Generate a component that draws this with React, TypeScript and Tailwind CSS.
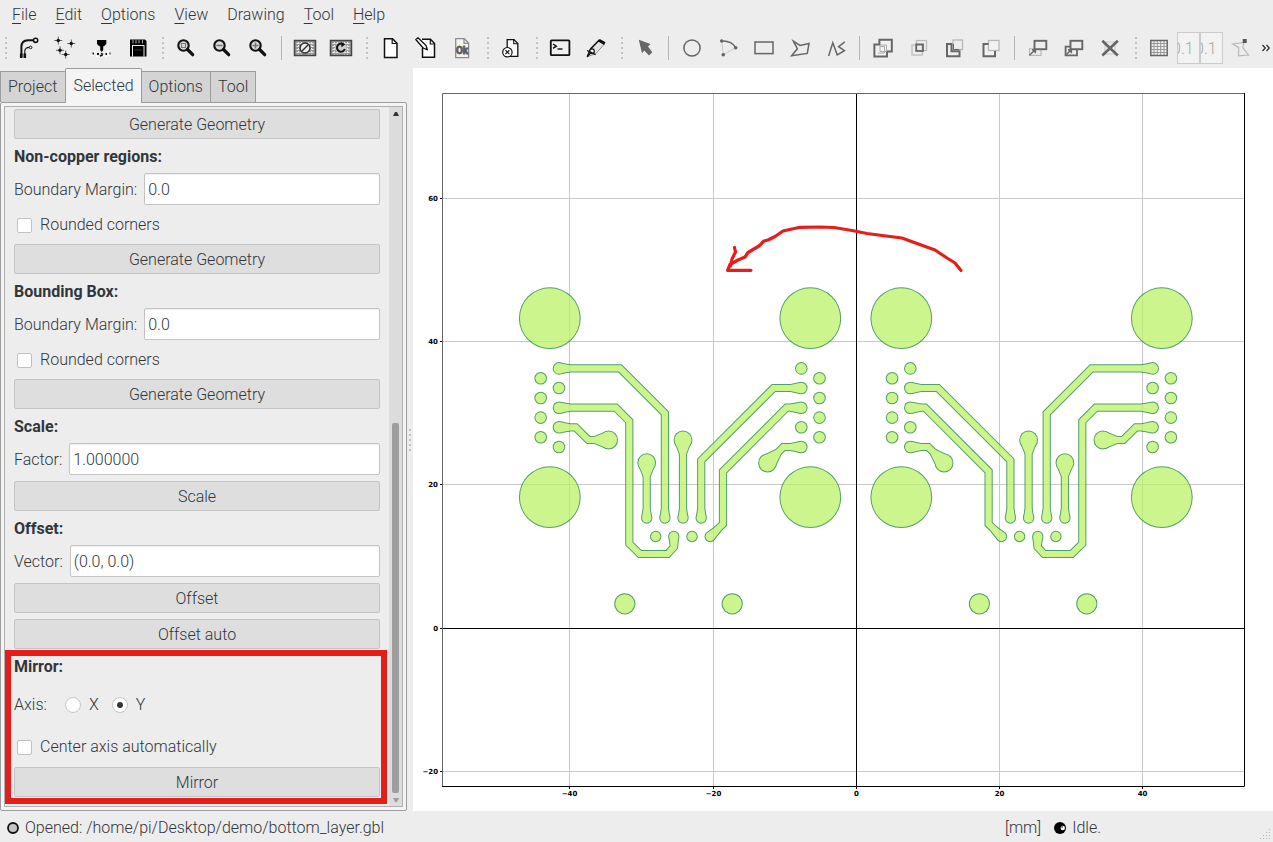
import { useState, type ReactNode } from "react";

/* ---------- toolbar ---------- */

function Icon({ children, stroke = "#111" }: { children: ReactNode; stroke?: string }) {
  return (
    <svg width="24" height="24" viewBox="0 0 24 24" fill="none" stroke={stroke} strokeWidth="1.5" aria-hidden="true">
      {children}
    </svg>
  );
}

function ToolButton({ label, children }: { label: string; children: ReactNode }) {
  return (
    <button type="button" aria-label={label} title={label} className="flex h-9 w-9 shrink-0 items-center justify-center">
      {children}
    </button>
  );
}

function Handle() {
  return (
    <span className="flex w-[13px] shrink-0 flex-col items-end gap-[3px] pr-1">
      {[0, 1, 2, 3, 4].map((i) => (
        <span key={i} className="h-0.5 w-0.5 bg-[#c2c2c2]" />
      ))}
    </span>
  );
}

function Separator() {
  return (
    <span className="flex w-[11px] shrink-0 justify-center">
      <span className="h-6 w-px bg-[#b4b4b4]" />
    </span>
  );
}

function Lens({ children }: { children: ReactNode }) {
  return (
    <Icon>
      <circle cx="9.5" cy="9.5" r="5.2" fill="#d9d9d9" strokeWidth="2.1" />
      <path d="M13.5 13.5 L18.7 18.7" strokeWidth="3.2" strokeLinecap="round" />
      <g stroke="#777" strokeWidth="1">{children}</g>
    </Icon>
  );
}

function MeshIcon({ children }: { children: ReactNode }) {
  return (
    <Icon>
      <rect x="1.5" y="4.5" width="21" height="15" fill="#9a9a9a" stroke="#444" />
      <path
        d="M3.5 7.5H21M3.5 10.5H21M3.5 13.5H21M3.5 16.5H21M5.5 6V18.5M8.5 6V18.5M15.5 6V18.5M18.5 6V18.5"
        stroke="#e6e6e6"
        strokeWidth="1"
        strokeDasharray="2 1"
      />
      {children}
    </Icon>
  );
}

const DARK = "#666";
const PALE = "#b9b9b9";

function Toolbar() {
  return (
    <div role="toolbar" className="flex h-10 items-center overflow-hidden">
      <span className="-ml-0.5 flex">
        <Handle />
      </span>
      <ToolButton label="New geometry">
        <Icon>
          <path d="M4.4 21V11Q4.4 4.4 11 4.3H16.8" strokeWidth="2" />
          <path d="M7.8 21V15Q8 11.6 12.4 11.4" strokeWidth="1.1" />
          <path d="M4.2 17.5V22M7.8 17.5V22" strokeWidth="2.6" />
          <circle cx="18.6" cy="4.3" r="2.1" strokeWidth="1.6" fill="#fff" />
          <circle cx="13.6" cy="11.4" r="1.3" strokeWidth="1" fill="#fff" />
        </Icon>
      </ToolButton>
      <ToolButton label="New excellon">
        <Icon>
          {[
            [5.3, 4.5],
            [18.3, 7.5],
            [7, 14.3],
            [12.7, 18.5],
          ].map(([x, y]) => (
            <g key={x}>
              <path d={`M${x - 4} ${y}H${x + 4}M${x} ${y - 4}V${y + 4}`} strokeWidth="0.9" stroke="#555" />
              <circle cx={x} cy={y} r="1.7" fill="#111" stroke="none" />
            </g>
          ))}
        </Icon>
      </ToolButton>
      <ToolButton label="Drill">
        <Icon>
          <path d="M3 20L6 15M21 20L18 15M8 19V21M17 19V21" stroke="#fff" strokeWidth="2" />
          <path d="M8 4H17.3V8L15 10.3H10.3L8 8Z" fill="#000" stroke="none" />
          <path d="M11.2 10H14.2V14L12.7 16L11.2 14Z" fill="#000" stroke="none" />
          <path d="M3.5 17.5H5M8 18H10M12 17.5L14 18.5M16.5 18H18M20.5 17.5H21.5M11 20L13.5 19" strokeWidth="1.8" />
        </Icon>
      </ToolButton>
      <ToolButton label="Save">
        <Icon>
          <path d="M5 3.5H20L21.5 5V20.5H5Z" fill="#000" stroke="none" />
          <path d="M7 9.5H19.5M7.5 10V20.5M19 10V20.5" stroke="#ededed" strokeWidth="1" />
          <path d="M8 4V7.5M11 4V7.5M14 4V7.5M17.5 4V7.5" stroke="#aaa" strokeWidth="1" />
          <path d="M9.5 14H17" stroke="#333" strokeWidth="1" />
        </Icon>
      </ToolButton>
      <Handle />
      <ToolButton label="Zoom fit">
        <Lens>
          <rect x="7.5" y="7.5" width="4" height="4" />
        </Lens>
      </ToolButton>
      <ToolButton label="Zoom out">
        <Lens>
          <path d="M6.5 9.5H12.5" strokeWidth="1.5" />
        </Lens>
      </ToolButton>
      <ToolButton label="Zoom in">
        <Lens>
          <path d="M6.5 9.5H12.5M9.5 6.5V12.5" strokeWidth="1.5" />
        </Lens>
      </ToolButton>
      <Separator />
      <ToolButton label="Clear plot">
        <MeshIcon>
          <circle cx="12" cy="12" r="5" fill="#eee" stroke="#333" />
          <path d="M9 15L15 9" stroke="#333" />
        </MeshIcon>
      </ToolButton>
      <ToolButton label="Replot">
        <MeshIcon>
          <circle cx="12" cy="12" r="5.6" fill="#ccc" stroke="none" />
          <path d="M14.5 8.6A4 4 0 1 0 15.8 13" stroke="#111" strokeWidth="2" />
          <path d="M11.8 6L16.4 8.2L12.6 11.2Z" fill="#111" stroke="none" />
        </MeshIcon>
      </ToolButton>
      <Handle />
      <ToolButton label="New blank geometry">
        <Icon>
          <path d="M6.5 2.7H14.5L19 7.2V21.5H6.5Z" fill="#fff" />
          <path d="M14.2 3V7.5H18.8" strokeWidth="1.2" />
        </Icon>
      </ToolButton>
      <ToolButton label="Edit geometry">
        <Icon>
          <path d="M8 3.3H16.5L20.5 7.5V21.3H8.5V12" fill="#fff" />
          <path d="M16.3 3.5V8H20.3" strokeWidth="1.2" />
          <path d="M1.8 3.5L4 1.8L12 9.5L13.4 13.8L9.2 12Z" fill="#fff" strokeWidth="1.3" strokeLinejoin="round" />
        </Icon>
      </ToolButton>
      <ToolButton label="Update geometry">
        <Icon stroke="#8c8c8c">
          <path d="M5.7 2.7H14.3L18.6 7V21.6H5.7Z" fill="#f3f3f3" strokeWidth="1.3" />
          <path d="M14 3V7.3H18.5" strokeWidth="1.2" />
          <text
            x="12.1"
            y="18.4"
            textAnchor="middle"
            fontSize="10"
            fontWeight="700"
            fontFamily="'Liberation Sans Narrow', Roboto, sans-serif"
            fill="#5e5e5e"
            stroke="#5e5e5e"
            strokeWidth="0.8"
          >
            Ok
          </text>
        </Icon>
      </ToolButton>
      <Handle />
      <ToolButton label="Delete">
        <Icon>
          <path d="M8.2 3.6H15L18.8 7.5V20.4H8.2Z" fill="#fff" strokeWidth="1.3" />
          <path d="M14.7 4V7.8H18.5" strokeWidth="1.1" />
          <circle cx="8.4" cy="16.2" r="4.7" fill="#fff" strokeWidth="1.2" />
          <path d="M6.4 14.2L10.4 18.2M10.4 14.2L6.4 18.2" strokeWidth="1.2" />
        </Icon>
      </ToolButton>
      <Handle />
      <ToolButton label="Command line">
        <Icon>
          <rect x="2.8" y="4.4" width="18.6" height="14.8" rx="0.8" fill="#f1f1f1" strokeWidth="1.8" />
          <path d="M5 8L8.3 10.2L5 12.4" strokeWidth="1.5" />
          <path d="M9.5 13H14.5" strokeWidth="1.4" />
        </Icon>
      </ToolButton>
      <ToolButton label="Measure">
        <Icon>
          <path d="M3.3 20.6L5.5 14.5L15 4L20.5 8L11.5 18Z" fill="#e4e4e4" stroke="#888" strokeWidth="0.9" />
          <path d="M3.2 20.8L7 12.5L15.5 3.8" strokeWidth="1.5" />
          <path d="M15 4.2L20.8 7.6" strokeWidth="3" />
          <circle cx="8" cy="15.2" r="2.3" fill="#fff" strokeWidth="1.2" />
          <path d="M3.3 20.8L7.6 15.8M3 14.5L11.6 18.6" strokeWidth="1.3" />
        </Icon>
      </ToolButton>
      <Handle />
      <ToolButton label="Select">
        <Icon>
          <path d="M5.8 3.8L17.5 8L15 10.6L19.3 16.2L16 19.4L11.3 14.5L9 17.2Z" fill={DARK} stroke="none" />
        </Icon>
      </ToolButton>
      <Separator />
      <ToolButton label="Add circle">
        <Icon stroke={DARK}>
          <circle cx="12" cy="12" r="8.1" />
        </Icon>
      </ToolButton>
      <ToolButton label="Add arc">
        <Icon stroke={DARK}>
          <path d="M5.7 5Q15.5 4.5 19.7 11.7" />
          <path d="M5.7 5L7.3 18.7L19.7 11.7" stroke="#c4c4c4" strokeWidth="0.9" />
          <g fill={DARK} stroke="none">
            <circle cx="5.7" cy="5" r="1.8" />
            <circle cx="19.7" cy="11.7" r="1.8" />
            <circle cx="7.3" cy="18.7" r="1.8" />
          </g>
        </Icon>
      </ToolButton>
      <ToolButton label="Add rectangle">
        <Icon stroke={DARK}>
          <rect x="3" y="6" width="18" height="11.6" />
        </Icon>
      </ToolButton>
      <ToolButton label="Add polygon">
        <Icon stroke={DARK}>
          <path d="M5.4 5.2L12 9.4L21 7.4L19.3 17.4L3.6 19.8L9.4 12.8Z" />
        </Icon>
      </ToolButton>
      <ToolButton label="Add path">
        <Icon stroke={DARK}>
          <path d="M4.6 20L8.8 6.8L13.2 18.8L20.4 14.6L14.6 10.6L20.8 5.8" />
        </Icon>
      </ToolButton>
      <Separator />
      <ToolButton label="Union">
        <Icon stroke={DARK}>
          <path d="M8.4 3.8H20.8V15.4H16V20.4H3.4V8.4H8.4Z" strokeWidth="2" fill="#f2f2f2" />
          <path d="M9 15.5V9H15.5V15.5ZM9.5 10.5H13.5V17H7" stroke="#aaa" strokeWidth="1" />
        </Icon>
      </ToolButton>
      <ToolButton label="Intersection">
        <Icon stroke={PALE}>
          <rect x="9.5" y="4.5" width="10" height="10" strokeWidth="1.2" />
          <rect x="5" y="9" width="10.3" height="10" strokeWidth="1.2" />
          <rect x="9.2" y="8.4" width="6.8" height="6.6" stroke={DARK} strokeWidth="1.8" />
        </Icon>
      </ToolButton>
      <ToolButton label="Subtraction">
        <Icon stroke={PALE}>
          <rect x="10" y="4" width="9.5" height="9.5" strokeWidth="1.3" />
          <path d="M4 8H8.5V15.3H16.5V20.3H4Z" stroke={DARK} strokeWidth="2" />
          <path d="M10.5 8V13.5H16" stroke={DARK} strokeWidth="1" />
        </Icon>
      </ToolButton>
      <ToolButton label="Cut">
        <Icon stroke={PALE}>
          <path d="M8.8 8H4.5V20H16V15.5H8.8Z" stroke="none" fill="#f2f2f2" />
          <rect x="9.5" y="4.5" width="10.5" height="10" strokeWidth="1.3" fill="#f2f2f2" />
          <path d="M9.5 8H4.5V20.2H16V15" stroke={DARK} strokeWidth="2" />
        </Icon>
      </ToolButton>
      <Separator />
      <ToolButton label="Move">
        <Icon stroke={DARK}>
          <rect x="3.5" y="12.8" width="11.5" height="6.6" stroke={PALE} strokeWidth="1.2" />
          <rect x="8.5" y="4.8" width="11.8" height="8.4" strokeWidth="1.9" fill="#ededed" />
          <path d="M3.5 19.3L8.4 14.4" strokeWidth="1.4" />
          <path d="M6 13.5H9.6V17Z" fill={DARK} strokeWidth="1" />
        </Icon>
      </ToolButton>
      <ToolButton label="Copy">
        <Icon stroke={DARK}>
          <path d="M8 10.6H3.6V19.4H15V14" strokeWidth="1.8" />
          <rect x="8.5" y="4.8" width="11.8" height="8.4" strokeWidth="1.9" fill="#ededed" />
          <path d="M4.5 18.5L8.4 14.6" strokeWidth="1.4" />
          <path d="M6 13.7H9.6V17Z" fill={DARK} strokeWidth="1" />
        </Icon>
      </ToolButton>
      <ToolButton label="Delete shape">
        <Icon stroke={DARK}>
          <path d="M7 6H17V18H7Z" stroke="#c8c8c8" strokeWidth="1" />
          <path d="M4.3 4.8L19.8 19.4M19.8 4.8L4.3 19.4" strokeWidth="2.7" />
        </Icon>
      </ToolButton>
      <Handle />
      <ToolButton label="Snap to grid">
        <Icon stroke={DARK}>
          <rect x="3.8" y="4.5" width="16.4" height="15" fill="#f0f0f0" />
          <path d="M7 5V19M10.3 5V19M13.7 5V19M17 5V19M4 7.5H20M4 10.5H20M4 13.5H20M4 16.5H20" stroke="#909090" strokeWidth="0.9" />
        </Icon>
      </ToolButton>
      {["Grid x", "Grid y"].map((name) => (
        <input
          key={name}
          aria-label={name}
          defaultValue="0.1"
          disabled
          className="h-8 w-[23px] shrink-0 overflow-hidden border border-[#cbcbcb] bg-[#f2f2f2] indent-[-6px] text-[#a6a6a6]"
        />
      ))}
      <ToolButton label="Snap to corner">
        <Icon stroke={PALE}>
          <path d="M3.7 8L15 6.4L13.7 11.5L19.5 19L9.5 19.8L9.7 11.7Z" strokeWidth="1.2" />
          <rect x="13.7" y="3" width="4" height="4" fill="#555" stroke="none" />
        </Icon>
      </ToolButton>
      <button type="button" aria-label="More tools" className="flex w-3.5 shrink-0 justify-center">
        <svg width="10" height="8" viewBox="0 0 10 8" fill="none" stroke="#333" strokeWidth="1.3" aria-hidden="true">
          <path d="M1.5 1L4.2 4L1.5 7M5.5 1L8.2 4L5.5 7" />
        </svg>
      </button>
    </div>
  );
}

/* ---------- side panel ---------- */

function PushButton({ children }: { children: ReactNode }) {
  return (
    <button type="button" className="h-[30px] w-full rounded-xs border border-[#c4c4c4] bg-[#dedede] pt-0.5 leading-6">
      {children}
    </button>
  );
}

function Heading({ children }: { children: ReactNode }) {
  return <h2 className="h-[22px] leading-6 font-bold">{children}</h2>;
}

function Field({ id, label, value }: { id: string; label: string; value: string }) {
  return (
    <div className="flex h-8 items-center gap-[7px]">
      <label htmlFor={id} className="pt-0.5 whitespace-nowrap">
        {label}
      </label>
      <input
        id={id}
        defaultValue={value}
        className="h-8 min-w-0 flex-1 rounded-xs border border-[#c4c4c4] bg-white px-[3px] shadow-[inset_0_1px_1px_#eeeeee] outline-none"
      />
    </div>
  );
}

function Check({ label }: { label: string }) {
  return (
    <label className="flex h-7 items-center gap-2 pl-[3px]">
      <input type="checkbox" className="h-[15px] w-[15px] appearance-none rounded-xs border border-[#c2c2c2] bg-white checked:bg-[#31363b]" />
      {label}
    </label>
  );
}

function AxisOption({ value, axis, onPick }: { value: string; axis: string; onPick: (v: string) => void }) {
  return (
    <label className="flex items-center gap-2">
      <input
        type="radio"
        name="axis"
        value={value}
        checked={axis === value}
        onChange={() => onPick(value)}
        className="flex h-4 w-4 appearance-none items-center justify-center rounded-full border border-[#c8c8c8] bg-white before:h-1.5 before:w-1.5 before:rounded-full checked:before:bg-[#31363b]"
      />
      {value}
    </label>
  );
}

function SidePanel() {
  const [axis, setAxis] = useState("Y");
  return (
    <aside className="flex w-[407px] shrink-0 flex-col">
      <div role="tablist" className="flex h-[34px] items-end">
        {["Project", "Selected", "Options", "Tool"].map((name) =>
          name === "Selected" ? (
            <button
              key={name}
              type="button"
              role="tab"
              aria-selected="true"
              className="relative z-10 -mb-px -ml-px h-[35px] rounded-t-xs border border-b-0 border-[#9c9c9c] bg-[#f4f4f4] px-[7px]"
            >
              {name}
            </button>
          ) : (
            <button
              key={name}
              type="button"
              role="tab"
              aria-selected="false"
              className="-ml-px h-[31px] border border-b-0 border-[#9c9c9c] bg-[#d4d4d4] px-[7px] first:ml-0 first:pr-2"
            >
              {name}
            </button>
          ),
        )}
      </div>
      <div role="tabpanel" className="flex flex-1 flex-col rounded-xs border border-[#9c9c9c] bg-[#f4f4f4] p-[3px]">
        <div className="flex flex-1 border border-[#b0b0b0] bg-[#ededed]">
          <div className="flex flex-1 flex-col gap-1.5 pt-0.5 pr-[9px] pb-2 pl-[9px]">
            <PushButton>Generate Geometry</PushButton>
            <Heading>Non-copper regions:</Heading>
            <Field id="ncr-margin" label="Boundary Margin:" value="0.0" />
            <div className="-mb-px">
              <Check label="Rounded corners" />
            </div>
            <PushButton>Generate Geometry</PushButton>
            <Heading>Bounding Box:</Heading>
            <Field id="bb-margin" label="Boundary Margin:" value="0.0" />
            <div className="-mb-px">
              <Check label="Rounded corners" />
            </div>
            <PushButton>Generate Geometry</PushButton>
            <Heading>Scale:</Heading>
            <Field id="scale-factor" label="Factor:" value="1.000000" />
            <PushButton>Scale</PushButton>
            <Heading>Offset:</Heading>
            <Field id="offset-vector" label="Vector:" value="(0.0, 0.0)" />
            <PushButton>Offset</PushButton>
            <PushButton>Offset auto</PushButton>
            <section className="relative flex flex-col gap-1.5">
              <Heading>Mirror:</Heading>
              <div role="radiogroup" aria-labelledby="axis-label" className="flex h-11 items-center">
                <span id="axis-label" className="w-[51px]">
                  Axis:
                </span>
                <div className="flex gap-[13px]">
                  <AxisOption value="X" axis={axis} onPick={setAxis} />
                  <AxisOption value="Y" axis={axis} onPick={setAxis} />
                </div>
              </div>
              <Check label="Center axis automatically" />
              <PushButton>Mirror</PushButton>
              <div className="pointer-events-none absolute -top-[5px] -right-[7px] -bottom-[7px] -left-[9px] border-[6px] border-[#e51e1b]" />
            </section>
          </div>
          <div className="flex w-[13px] flex-col items-center justify-between bg-[#dcdcdc] pt-[5px] pb-1">
            <svg width="6" height="4" viewBox="0 0 6 4" aria-hidden="true">
              <path d="M0 4L2 0H4L6 4Z" fill="#31363b" />
            </svg>
            <div className="flex w-full flex-1 flex-col items-center justify-end py-[5px]">
              <div className="h-[55%] w-[7px] rounded-xs bg-[#9d9d9d]" />
            </div>
            <svg width="6" height="4" viewBox="0 0 6 4" aria-hidden="true">
              <path d="M0 0H6L4 4H2Z" fill="#9d9d9d" />
            </svg>
          </div>
        </div>
      </div>
    </aside>
  );
}

/* ---------- plot ---------- */

type Pt = [number, number];

const holes: Pt[] = [[549.8, 318.2], [549.8, 497.2], [810.3, 318.2], [810.3, 497.2]];
const pins: Pt[] = [
  [540.7, 378.3], [540.7, 398], [540.7, 417.6], [540.7, 437.2],
  [559, 368.4], [559, 388], [559, 407.7], [559, 427.3], [559, 447],
  [801.3, 368.4], [801.3, 388], [801.3, 407.7], [801.3, 427.3], [801.3, 447],
  [819.5, 378.3], [819.5, 398], [819.5, 417.6], [819.5, 437.2],
];
const pads: Pt[] = [
  [655.7, 536.5], [673.8, 536.5], [692, 536.5], [710.2, 536.5],
  [646.7, 518], [664.9, 518], [683, 518], [701.2, 518],
];
const vias: Pt[] = [[608.7, 440], [646.7, 462.7], [683, 440], [767.5, 463]];
const drills: Pt[] = [[624.8, 603.8], [732.2, 603.8]];

const circles: [Pt[], number][] = [[holes, 30.4], [pins, 5.8], [pads, 5.2], [vias, 8.9], [drills, 10.1]];

const traces = [
  "M559 368.4H620L664.9 413.3V518",
  "M559 407.7H615.8L629.3 421.2V543.6L639.8 554H667.6L674 547L673.8 536.5",
  "M559 427.3H575.6L588.3 440H608.7",
  "M646.7 462.7V518",
  "M683 440V518",
  "M801.3 388H773.6L701.2 460.4V518",
  "M801.3 407.7H786.6L723 471.3V524L710.2 536.5",
  "M801.3 447H783.3L767.5 463",
];

/* pad centre, pad radius, point where the teardrop meets its trace */
const tears: [Pt, number, Pt][] = [
  [[559, 368.4], 5.8, [570, 368.4]],
  [[559, 407.7], 5.8, [570, 407.7]],
  [[559, 427.3], 5.8, [570, 427.3]],
  [[801.3, 388], 5.8, [790.3, 388]],
  [[801.3, 407.7], 5.8, [790.3, 407.7]],
  [[801.3, 447], 5.8, [790.3, 447]],
  [[646.7, 518], 5.2, [646.7, 509]],
  [[664.9, 518], 5.2, [664.9, 509]],
  [[683, 518], 5.2, [683, 509]],
  [[701.2, 518], 5.2, [701.2, 509]],
  [[673.8, 536.5], 5.2, [674, 547]],
  [[710.2, 536.5], 5.2, [718, 529]],
  [[608.7, 440], 8.7, [594, 440]],
  [[646.7, 462.7], 8.7, [646.7, 476.5]],
  [[683, 440], 8.7, [683, 454]],
  [[767.5, 463], 8.7, [778.5, 452]],
];

function tearPoints([px, py]: Pt, r: number, [qx, qy]: Pt, grow: number) {
  const len = Math.hypot(qx - px, qy - py);
  const ux = (qx - px) / len;
  const uy = (qy - py) / len;
  const a = r * 0.94 + grow;
  const b = 3.6 + grow;
  const s = r * 0.3;
  return [
    [px + ux * s - uy * a, py + uy * s + ux * a],
    [qx - uy * b, qy + ux * b],
    [qx + uy * b, qy - ux * b],
    [px + ux * s + uy * a, py + uy * s - ux * a],
  ].join(" ");
}

function Copper({ color, grow }: { color: string; grow: number }) {
  return (
    <g>
      {traces.map((d) => (
        <path key={d} d={d} fill="none" stroke={color} strokeWidth={7.2 + 2 * grow} />
      ))}
      {tears.map(([p, r, q]) => (
        <polygon key={p.join()} points={tearPoints(p, r, q, grow)} fill={color} />
      ))}
      {circles.map(([list, r]) =>
        list.map(([x, y]) => <circle key={`${x},${y}`} cx={x} cy={y} r={r + grow} fill={color} />),
      )}
    </g>
  );
}

function Board() {
  return (
    <g opacity="0.75">
      <Copper color="#1a8038" grow={0.5} />
      <Copper color="#bbf268" grow={-0.5} />
    </g>
  );
}

const xTicks: [number, string][] = [[569.5, "−40"], [713.5, "−20"], [856.5, "0"], [999.5, "20"], [1142.5, "40"]];
const yTicks: [number, string][] = [[198.5, "60"], [341.5, "40"], [484.5, "20"], [628.5, "0"], [771.5, "−20"]];

function Plot() {
  return (
    <main className="relative min-w-0 flex-1 bg-white">
      <svg className="absolute inset-0 h-full w-full" viewBox="413 68 860 743" role="img" aria-label="Copper layer and its mirrored copy">
        <g stroke="#c9c9c9">
          {xTicks.map(([x]) => (
            <path key={x} d={`M${x} 94V786`} />
          ))}
          {yTicks.map(([y]) => (
            <path key={y} d={`M443 ${y}H1244`} />
          ))}
        </g>
        <Board />
        <g transform="translate(1711.6 0) scale(-1 1)">
          <Board />
        </g>
        <g stroke="#000" fill="none">
          <path d="M856.5 94V786M443 628.5H1244" />
          <path d="M442.5 786V93.5H1244" stroke="#666" />
          <path d="M442 786.5H1244.5V93" />
          {xTicks.map(([x]) => (
            <path key={x} d={`M${x} 787V789`} />
          ))}
          {yTicks.map(([y]) => (
            <path key={y} d={`M440 ${y}H442`} />
          ))}
        </g>
        <g fontFamily="DejaVu Sans, sans-serif" fontSize="7" fontWeight="700" fill="#000">
          {xTicks.map(([x, t]) => (
            <text key={x} x={x} y="796" textAnchor="middle">
              {t}
            </text>
          ))}
          {yTicks.map(([y, t]) => (
            <text key={y} x="438" y={y + 2} textAnchor="end">
              {t}
            </text>
          ))}
        </g>
        <g fill="none" stroke="#e51e1b" strokeWidth="3.2" strokeLinejoin="round" strokeLinecap="round">
          <path d="M961 270.5L955 263L947 258L935 250L917 243.5L902 238L882 235.5L867 233.5L852 230.5L834 227.5L820 227L800 227.3L783 231L775 236.5L768 240L764 241L759 246L748 252.5L745 257L738 260L730 264.5L727.5 270.3H751" />
          <path d="M734.5 247.5L735.5 252L732 259L730.5 266" />
        </g>
      </svg>
    </main>
  );
}

/* ---------- window ---------- */

const menus: string[] = ["File", "Edit", "Options", "View", "Drawing", "Tool", "Help"];

export default function App() {
  return (
    <div className="flex min-h-screen flex-col bg-[#ededed] font-['Roboto',sans-serif] text-base font-light text-[#31363b]">
      <nav className="flex h-7 items-center gap-[19px] pt-0.5 pl-3">
        {menus.map((name) => (
          <button key={name} type="button" className="leading-6">
            {name === "Drawing" ? (
              name
            ) : (
              <>
                <span className="underline underline-offset-3">{name[0]}</span>
                {name.slice(1)}
              </>
            )}
          </button>
        ))}
      </nav>
      <Toolbar />
      <div className="flex flex-1">
        <SidePanel />
        <div className="flex w-1.5 shrink-0 flex-col items-center justify-center gap-[3px]">
          {[0, 1, 2, 3, 4].map((i) => (
            <span key={i} className="h-0.5 w-0.5 bg-[#c2c2c2]" />
          ))}
        </div>
        <Plot />
      </div>
      <footer className="relative flex h-[31px] items-center justify-between pt-0.5 pr-[172px] pl-[7px]">
        <div className="flex items-center gap-1.5">
          <svg width="12" height="12" viewBox="0 0 12 12" aria-hidden="true">
            <circle cx="6" cy="6" r="5" fill="#c4c4c4" stroke="#111" strokeWidth="1.8" />
          </svg>
          Opened: /home/pi/Desktop/demo/bottom_layer.gbl
        </div>
        <div className="flex items-center gap-[13px]">
          [mm]
          <span className="flex items-center gap-1.5">
            <svg width="12" height="12" viewBox="0 0 12 12" aria-hidden="true">
              <circle cx="6" cy="6" r="6" fill="#000" />
              <circle cx="8.8" cy="6" r="2.2" fill="#fff" />
              <circle cx="8" cy="5" r="0.8" fill="#000" />
            </svg>
            Idle.
          </span>
        </div>
        <svg className="absolute right-0.5 bottom-0.5" width="11" height="11" viewBox="0 0 11 11" fill="#b5b5b5" aria-hidden="true">
          {[0, 1, 2, 3].map((row) =>
            Array.from({ length: row + 1 }, (_, i) => (
              <rect key={`${row}-${i}`} x={9 - 3 * i} y={3 * row} width="1" height="1" />
            )),
          )}
        </svg>
      </footer>
    </div>
  );
}
